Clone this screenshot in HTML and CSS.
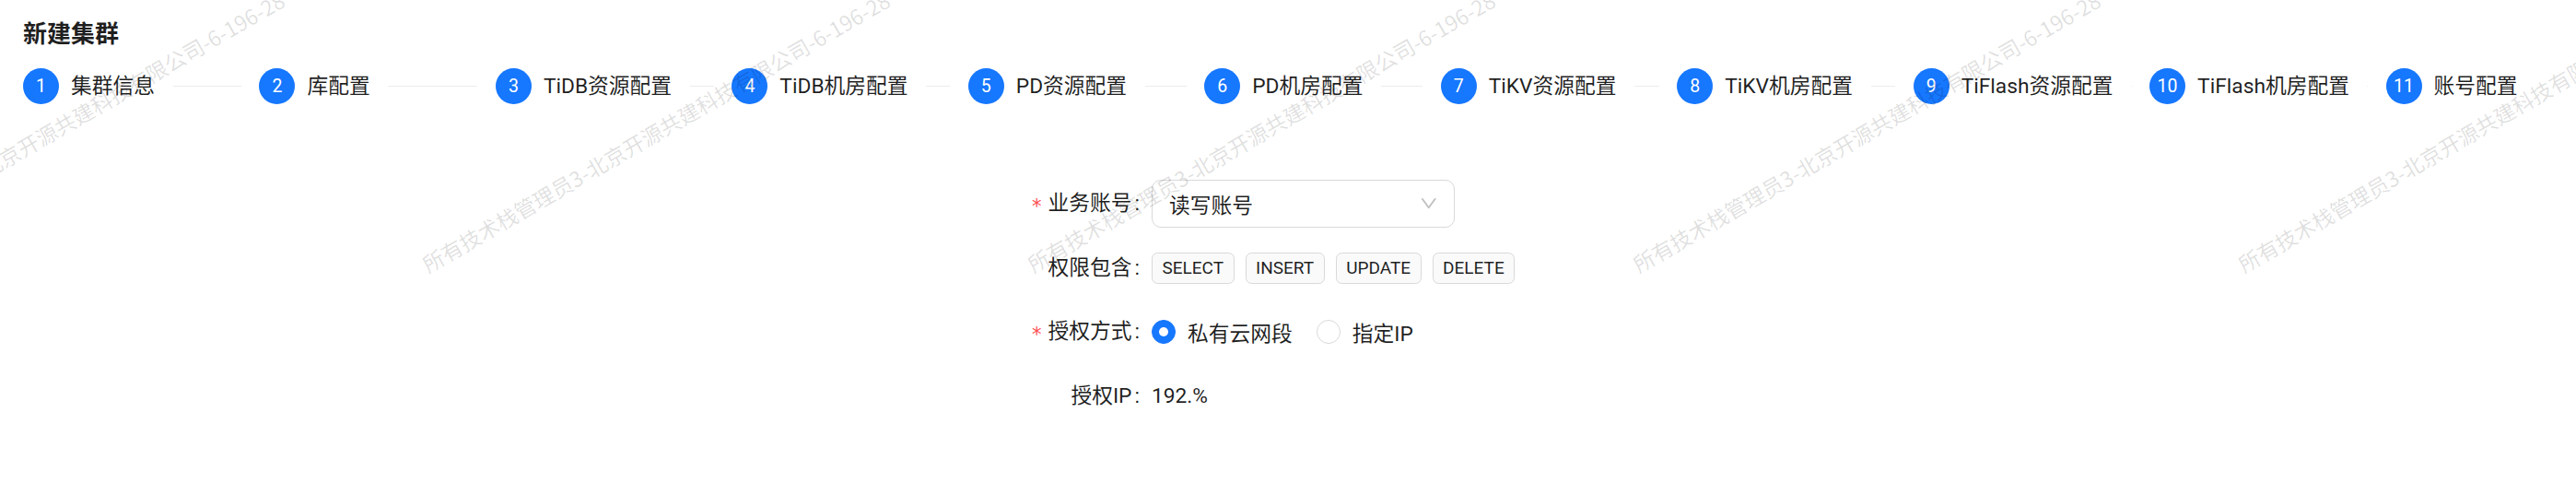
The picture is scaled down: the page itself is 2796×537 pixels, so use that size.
FILE: index.html
```html
<!DOCTYPE html>
<html lang="zh-CN">
<head>
<meta charset="utf-8">
<title>新建集群</title>
<link rel="stylesheet" href="styles.css">
</head>
<body>
<div class="page">
  <div class="wm-layer" aria-hidden="true">
    <span class="wm">所有技术栈管理员3-北京开源共建科技有限公司-6-196-28</span>
    <span class="wm">所有技术栈管理员3-北京开源共建科技有限公司-6-196-28</span>
    <span class="wm">所有技术栈管理员3-北京开源共建科技有限公司-6-196-28</span>
    <span class="wm">所有技术栈管理员3-北京开源共建科技有限公司-6-196-28</span>
    <span class="wm">所有技术栈管理员3-北京开源共建科技有限公司-6-196-28</span>
  </div>

  <h1 class="title">新建集群</h1>

  <div class="steps">
    <div class="step"><span class="step-icon">1</span><span class="step-title">集群信息</span></div>
    <div class="step"><span class="step-icon">2</span><span class="step-title">库配置</span></div>
    <div class="step"><span class="step-icon">3</span><span class="step-title">TiDB资源配置</span></div>
    <div class="step"><span class="step-icon">4</span><span class="step-title">TiDB机房配置</span></div>
    <div class="step"><span class="step-icon">5</span><span class="step-title">PD资源配置</span></div>
    <div class="step"><span class="step-icon">6</span><span class="step-title">PD机房配置</span></div>
    <div class="step"><span class="step-icon">7</span><span class="step-title">TiKV资源配置</span></div>
    <div class="step"><span class="step-icon">8</span><span class="step-title">TiKV机房配置</span></div>
    <div class="step"><span class="step-icon">9</span><span class="step-title">TiFlash资源配置</span></div>
    <div class="step"><span class="step-icon">10</span><span class="step-title">TiFlash机房配置</span></div>
    <div class="step"><span class="step-icon">11</span><span class="step-title">账号配置</span></div>
  </div>

  <form class="form">
    <div class="label"><span class="star">*</span>业务账号</div>
    <div class="control">
      <div class="select">
        <span class="select-value">读写账号</span>
        <svg class="select-arrow" viewBox="64 64 896 896" width="19.5" height="19.5" aria-hidden="true"><path d="M884 256h-75c-5.1 0-9.9 2.5-12.9 6.6L512 654.2 227.9 262.6c-3-4.1-7.8-6.6-12.9-6.6h-75c-6.5 0-10.300 7.4-6.5 11.4l353.6 487.6c12.8 17.6 39 17.6 51.7 0l353.6-487.6c3.9-4 .1-11.4-6.5-11.4z"/></svg>
      </div>
    </div>

    <div class="label">权限包含</div>
    <div class="control">
      <span class="tag">SELECT</span>
      <span class="tag">INSERT</span>
      <span class="tag">UPDATE</span>
      <span class="tag">DELETE</span>
    </div>

    <div class="label"><span class="star">*</span>授权方式</div>
    <div class="control">
      <label class="radio"><span class="radio-dot checked"></span><span class="radio-label">私有云网段</span></label>
      <label class="radio"><span class="radio-dot"></span><span class="radio-label">指定IP</span></label>
    </div>

    <div class="label">授权IP</div>
    <div class="control">192.%</div>
  </form>
</div>
</body>
</html>
```

FILE: styles.css
```css
html, body {
  margin: 0;
  padding: 0;
  background: #ffffff;
}

body {
  font-family: Roboto, "Noto Sans CJK SC", sans-serif;
  font-size: 22.75px;
  color: rgba(0, 0, 0, 0.88);
  width: 2796px;
  height: 537px;
  overflow: hidden;
}

.page {
  position: relative;
  box-sizing: border-box;
  height: 537px;
  padding: 18px 44px 0 25px;
  overflow: hidden;
}

/* watermark overlay */
.wm-layer {
  position: absolute;
  left: -197px;
  top: 273px;
  display: flex;
  pointer-events: none;
  z-index: 10;
}

.wm {
  flex: 0 0 657px;
  white-space: nowrap;
  font-family: "Noto Sans CJK SC", sans-serif;
  font-size: 23px;
  line-height: 30px;
  color: rgba(0, 0, 0, 0.13);
  transform: rotate(-30deg);
  transform-origin: 0 50%;
}

.title {
  margin: 0;
  font-size: 26px;
  font-weight: 600;
  line-height: 39px;
  color: rgba(0, 0, 0, 0.88);
}

/* steps */
.steps {
  display: flex;
  margin-top: 16.5px;
}

.step {
  flex: 1 1 0;
  min-width: 0;
  display: flex;
  align-items: flex-start;
  padding-left: 19.5px;
  overflow: hidden;
}

.step:first-child {
  padding-left: 0;
}

.step:last-child {
  flex: none;
}

.step-icon {
  flex: none;
  width: 39px;
  height: 39px;
  border-radius: 50%;
  background: #1677ff;
  color: #ffffff;
  font-size: 19.5px;
  line-height: 39px;
  text-align: center;
  margin-right: 13px;
}

.step-title {
  position: relative;
  padding-right: 19.5px;
  line-height: 39px;
  white-space: nowrap;
}

.step-title::after {
  content: "";
  position: absolute;
  left: 100%;
  top: 19px;
  width: 9999px;
  height: 1px;
  background: #ececec;
}

.step:last-child .step-title::after {
  display: none;
}

/* form */
.form {
  margin-top: 82.5px;
  display: grid;
  grid-template-columns: 1225px auto;
  row-gap: 17.5px;
  align-items: center;
}

.label {
  height: 52px;
  line-height: 52px;
  text-align: right;
  white-space: nowrap;
}

.label::after {
  content: ":";
  margin: 0 13px 0 3px;
}

.star {
  display: inline-block;
  width: 11.5px;
  margin-right: 6.5px;
  color: #ff4d4f;
  font-family: "DejaVu Sans", sans-serif;
  font-size: 21px;
  line-height: 1;
  vertical-align: -0.12em;
  text-align: center;
}

.control {
  height: 52px;
  display: flex;
  align-items: center;
}

.select {
  box-sizing: border-box;
  width: 329px;
  height: 52px;
  border: 1px solid #d9d9d9;
  border-radius: 10px;
  padding: 0 18px;
  display: flex;
  align-items: center;
  justify-content: space-between;
  background: #ffffff;
}

.select-arrow {
  fill: rgba(0, 0, 0, 0.25);
  flex: none;
}

.tag {
  box-sizing: border-box;
  height: 34px;
  line-height: 32px;
  padding: 0 10.5px;
  border: 1px solid #d9d9d9;
  border-radius: 6.5px;
  background: #fafafa;
  font-size: 19px;
  margin-right: 12px;
  color: rgba(0, 0, 0, 0.88);
}

.radio {
  display: flex;
  align-items: center;
  margin-right: 13px;
}

.radio-dot {
  box-sizing: border-box;
  width: 26px;
  height: 26px;
  border-radius: 50%;
  border: 1px solid #d9d9d9;
  background: #ffffff;
  display: flex;
  align-items: center;
  justify-content: center;
}

.radio-dot.checked {
  background: #1677ff;
  border-color: #1677ff;
}

.radio-dot.checked::after {
  content: "";
  width: 10px;
  height: 10px;
  border-radius: 50%;
  background: #ffffff;
}

.radio-label {
  padding: 0 13px;
}
```
